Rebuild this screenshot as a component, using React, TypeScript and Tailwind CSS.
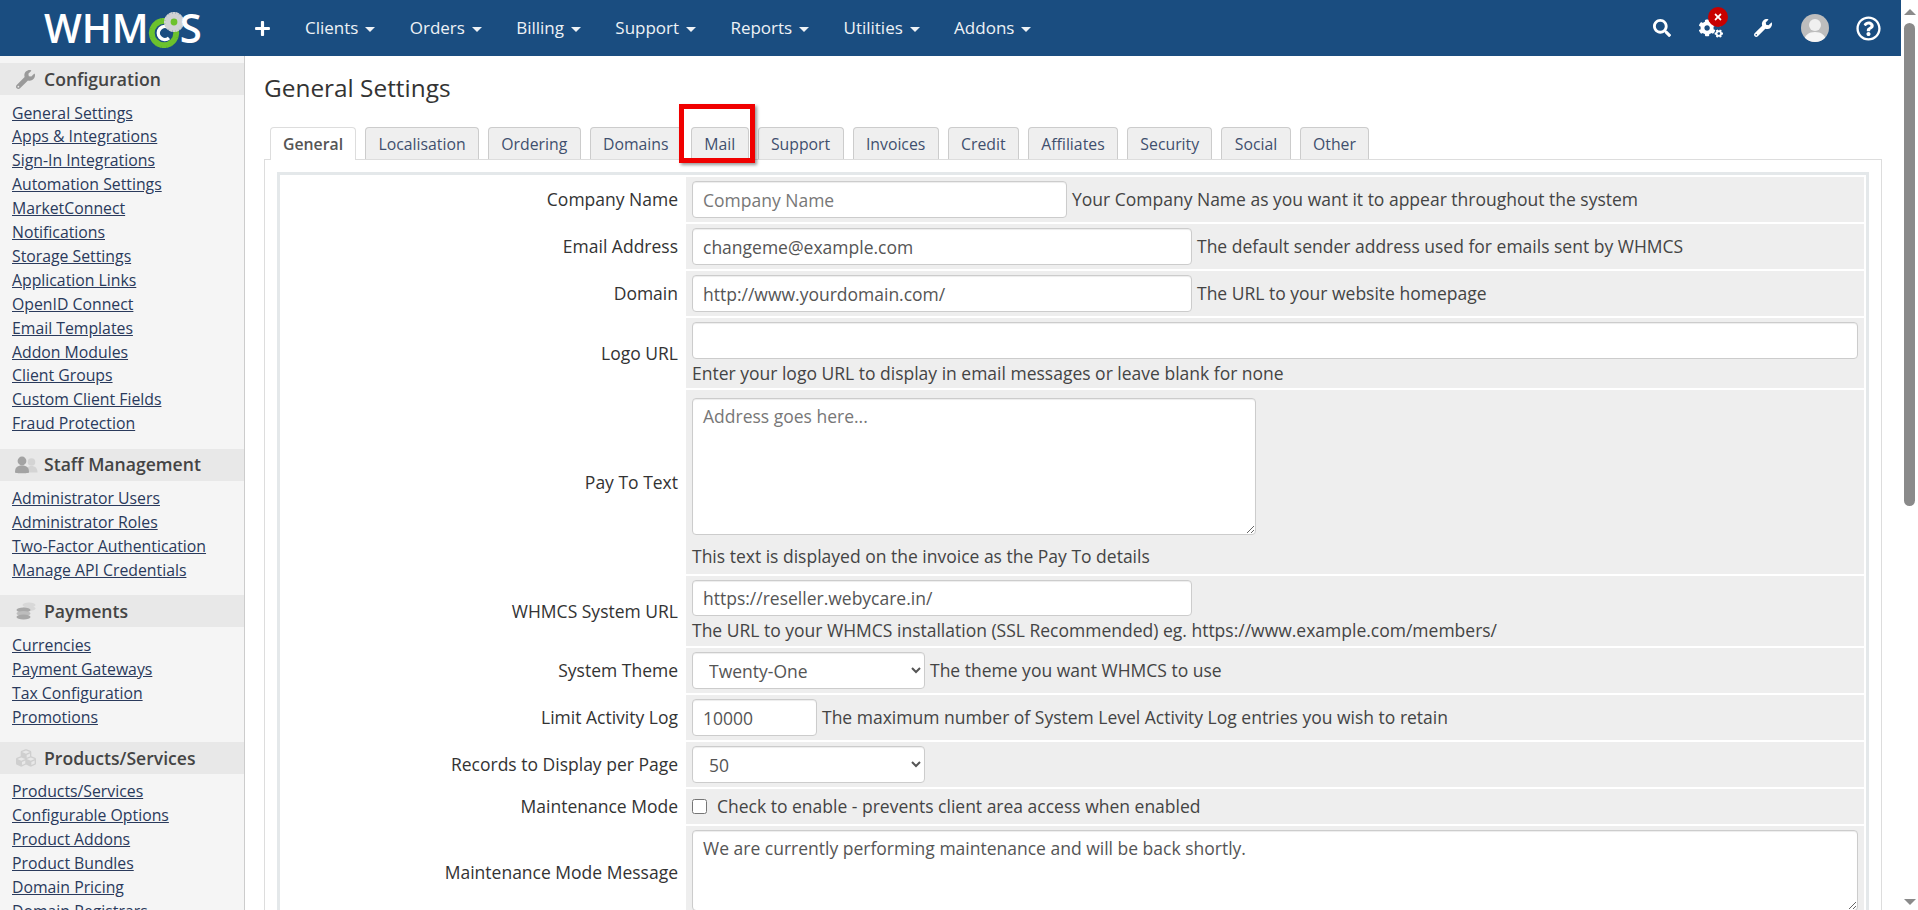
import type { ReactNode } from "react";
import { FaCogs, FaCubes, FaPlus, FaRegQuestionCircle, FaSearch, FaTimes, FaWrench } from "react-icons/fa";

const navItems = ["Clients", "Orders", "Billing", "Support", "Reports", "Utilities", "Addons"];
const tabs = ["General", "Localisation", "Ordering", "Domains", "Mail", "Support", "Invoices", "Credit", "Affiliates", "Security", "Social", "Other"];

const StaffIcon = () => (
  <svg width="24" height="18" viewBox="0 0 24 18">
    <circle cx="17.5" cy="6" r="3.8" fill="#d4d4d4" />
    <path d="M12 16.5c0-4.5 2-6.5 5.5-6.5s6 2 6 6.5z" fill="#d4d4d4" />
    <circle cx="8" cy="5" r="4.4" fill="#a3a3a3" />
    <path d="M1 16.5C1 11.5 3 9.5 8 9.5s7 2 7 7c0 1-14 1-14 0z" fill="#a3a3a3" />
  </svg>
);

const CoinsIcon = () => (
  <svg width="20" height="18" viewBox="0 0 20 18">
    <ellipse cx="13" cy="3" rx="6.5" ry="2.5" fill="#d8d8d8" />
    <ellipse cx="13" cy="6.5" rx="6.5" ry="2.5" fill="#d8d8d8" />
    <ellipse cx="7.5" cy="8" rx="7" ry="2.6" fill="#a8a8a8" />
    <ellipse cx="7.5" cy="11.5" rx="7" ry="2.6" fill="#bdbdbd" />
    <ellipse cx="7.5" cy="15" rx="7" ry="2.6" fill="#a8a8a8" />
  </svg>
);

const sections: { title: string; icon: ReactNode; links: string[] }[] = [
  {
    title: "Configuration",
    icon: <FaWrench size={19} color="#9a9a9a" />,
    links: [
      "General Settings",
      "Apps & Integrations",
      "Sign-In Integrations",
      "Automation Settings",
      "MarketConnect",
      "Notifications",
      "Storage Settings",
      "Application Links",
      "OpenID Connect",
      "Email Templates",
      "Addon Modules",
      "Client Groups",
      "Custom Client Fields",
      "Fraud Protection",
    ],
  },
  {
    title: "Staff Management",
    icon: <StaffIcon />,
    links: ["Administrator Users", "Administrator Roles", "Two-Factor Authentication", "Manage API Credentials"],
  },
  {
    title: "Payments",
    icon: <CoinsIcon />,
    links: ["Currencies", "Payment Gateways", "Tax Configuration", "Promotions"],
  },
  {
    title: "Products/Services",
    icon: <FaCubes size={20} color="#cfcfcf" />,
    links: ["Products/Services", "Configurable Options", "Product Addons", "Product Bundles", "Domain Pricing", "Domain Registrars"],
  },
];

const inputClass =
  "block h-[37px] rounded-[4px] border border-[#ccc] bg-white px-[10px] text-[#555] shadow-[inset_0_1px_1px_rgba(0,0,0,0.075)] outline-none placeholder:text-[#777]";

const Gear = ({ cx, cy, r, teeth, fill, hole, holeSize }: { cx: number; cy: number; r: number; teeth: number; fill: string; hole: string; holeSize: number }) => (
  <g>
    {Array.from({ length: teeth }).map((_, i) => (
      <rect key={i} x={cx - r * 0.17} y={cy - r} width={r * 0.34} height={r * 2} fill={fill} transform={`rotate(${(i * 180) / teeth} ${cx} ${cy})`} />
    ))}
    <circle cx={cx} cy={cy} r={r * 0.82} fill={fill} />
    <circle cx={cx} cy={cy} r={r * holeSize} fill={hole} />
  </g>
);

const Logo = () => (
  <div className="flex w-[210px] shrink-0 items-center text-[40px] leading-none font-semibold text-white">
    <span>WHM</span>
    <svg width="31" height="56" viewBox="0 0 31 56" className="overflow-visible">
      <Gear cx={15} cy={33} r={15} teeth={9} fill="#6cc22d" hole="#1a4d80" holeSize={0.62} />
      <path d="M20 28a6.5 6.5 0 1 0 0 10" fill="none" stroke="#fff" strokeWidth="3.5" />
      <Gear cx={25} cy={22} r={10} teeth={8} fill="#cfd2d4" hole="#6cc22d" holeSize={0.34} />
    </svg>
    <span className="relative">S</span>
  </div>
);

const TopBar = () => (
  <header className="flex h-14 shrink-0 items-center bg-[#1a4d80] pr-[20px] pl-[44px] text-white">
    <Logo />
    <FaPlus size={17} className="mr-[34px]" />
    <nav className="flex items-center gap-[34.3px] text-[17px] text-[#eef2f6]">
      {navItems.map((item) => (
        <span key={item} className="flex items-center">
          {item}
          <span className="mt-[2px] ml-[7px] border-x-[5px] border-t-[5px] border-x-transparent border-t-[#eef2f6]" />
        </span>
      ))}
    </nav>
    <div className="ml-auto flex items-center">
      <FaSearch size={18} />
      <div className="relative ml-[28px]">
        <FaCogs size={24} />
        <span className="absolute -top-[9px] left-[9px] flex h-[20px] w-[20px] items-center justify-center rounded-full bg-[#c80000]">
          <FaTimes size={10} />
        </span>
      </div>
      <FaWrench size={18} className="ml-[31px]" />
      <div className="ml-[29px] h-[28px] w-[28px] overflow-hidden rounded-full bg-[#bdbdbd]">
        <svg width="28" height="28" viewBox="0 0 28 28">
          <circle cx="14" cy="11" r="6" fill="#f0f0f0" />
          <path d="M3 28c0-7 5-10 11-10s11 3 11 10z" fill="#f5f5f5" />
        </svg>
      </div>
      <FaRegQuestionCircle size={25} className="ml-[27px]" />
    </div>
  </header>
);

const Sidebar = () => (
  <aside className="w-[245px] shrink-0 overflow-hidden border-r border-[#ccc] bg-[#f5f5f5] pt-[7px]">
    {sections.map((section) => (
      <section key={section.title} className="mb-[12.5px]">
        <h3 className="flex h-[32px] items-center bg-[#e8e8e8] text-[17.6px] font-semibold text-[#444]">
          <span className="flex w-[44px] shrink-0 justify-center pl-[7px]">{section.icon}</span>
          {section.title}
        </h3>
        <ul className="mt-[6.5px] pl-[12px] text-[15.8px] leading-[23.9px] text-[#2a3a5c]">
          {section.links.map((link) => (
            <li key={link}>
              <a className="underline">{link}</a>
            </li>
          ))}
        </ul>
      </section>
    ))}
  </aside>
);

const Field = ({ label, tall, children }: { label: string; tall?: boolean; children: ReactNode }) => (
  <>
    <label className="flex items-center justify-end pr-[8px] text-[#333]">{label}</label>
    <div className={`bg-[#eee] px-[6px] ${tall ? "pt-[4px] pb-[3px]" : "flex items-center py-[4px]"}`}>{children}</div>
  </>
);

const Help = ({ children }: { children: ReactNode }) => <span className="ml-[5px] text-[#444]">{children}</span>;

const HelpBlock = ({ className, children }: { className: string; children: ReactNode }) => (
  <span className={`block leading-[24px] text-[#444] ${className}`}>{children}</span>
);

const SettingsForm = () => (
  <div className="grid grid-cols-[404px_1fr] gap-y-[2px] border-[3px] border-[#e4e8ea] p-[2px] text-[17.5px]">
    <Field label="Company Name">
      <input className={`${inputClass} w-[375px]`} placeholder="Company Name" />
      <Help>Your Company Name as you want it to appear throughout the system</Help>
    </Field>
    <Field label="Email Address">
      <input className={`${inputClass} w-[500px]`} defaultValue="changeme@example.com" />
      <Help>The default sender address used for emails sent by WHMCS</Help>
    </Field>
    <Field label="Domain">
      <input className={`${inputClass} w-[500px]`} defaultValue="http://www.yourdomain.com/" />
      <Help>The URL to your website homepage</Help>
    </Field>
    <Field label="Logo URL" tall>
      <input className={`${inputClass} w-full`} />
      <HelpBlock className="mt-[2px]">Enter your logo URL to display in email messages or leave blank for none</HelpBlock>
    </Field>
    <Field label="Pay To Text" tall>
      <textarea className={`${inputClass} mt-[4px] !h-[137px] w-[564px] py-[3.5px]`} placeholder="Address goes here..." />
      <HelpBlock className="mt-[9px] pb-[3px]">This text is displayed on the invoice as the Pay To details</HelpBlock>
    </Field>
    <Field label="WHMCS System URL" tall>
      <input className={`${inputClass} !h-[36px] w-[500px]`} defaultValue="https://reseller.webycare.in/" />
      <HelpBlock className="mt-[2px] pb-[1px]">The URL to your WHMCS installation (SSL Recommended) eg. https://www.example.com/members/</HelpBlock>
    </Field>
    <Field label="System Theme">
      <select className={`${inputClass} w-[233px] pr-[2px] pl-[12px]`} defaultValue="Twenty-One">
        <option>Twenty-One</option>
      </select>
      <Help>The theme you want WHMCS to use</Help>
    </Field>
    <Field label="Limit Activity Log">
      <input className={`${inputClass} w-[125px]`} defaultValue="10000" />
      <Help>The maximum number of System Level Activity Log entries you wish to retain</Help>
    </Field>
    <Field label="Records to Display per Page">
      <select className={`${inputClass} w-[233px] pr-[2px] pl-[12px]`} defaultValue="50">
        <option>50</option>
      </select>
    </Field>
    <Field label="Maintenance Mode">
      <div className="flex h-[27px] items-center">
        <input type="checkbox" className="h-[15px] w-[15px] appearance-auto" />
        <span className="ml-[10px] text-[#444]">Check to enable - prevents client area access when enabled</span>
      </div>
    </Field>
    <Field label="Maintenance Mode Message" tall>
      <textarea
        className={`${inputClass} mb-[4px] !h-[81px] w-full py-[3.5px]`}
        defaultValue="We are currently performing maintenance and will be back shortly."
      />
    </Field>
  </div>
);

const Main = () => (
  <main className="relative min-w-0 flex-1 overflow-hidden bg-white px-[19px] pt-[16px]">
    <h1 className="h-[32px] text-[24.4px] leading-[32px] text-[#333]">General Settings</h1>
    <div className="mt-[23px] flex h-[33px] border-b border-[#ddd] text-[15.8px]">
      {tabs.map((tab, i) => (
        <span
          key={tab}
          className={
            i === 0
              ? "z-10 mr-[9px] ml-[6px] h-[33px] rounded-t-[4px] border border-b-0 border-[#ddd] bg-white px-[12px] leading-[33px] font-semibold text-[#555]"
              : "mr-[9px] h-[32px] rounded-t-[4px] border border-b-0 border-[#ccc] bg-[#efefef] px-[12.35px] leading-[33px] text-[#3f4f6e]"
          }
        >
          {tab}
        </span>
      ))}
    </div>
    <div className="h-[800px] border-x border-[#ddd] px-[12px] pt-[12px]">
      <SettingsForm />
    </div>
    {/* red marker from the original screenshot */}
    <div className="absolute top-[48px] left-[434px] h-[59px] w-[76px] border-[5px] border-[#f00000] shadow-[2px_2px_3px_rgba(0,0,0,0.4)]" />
  </main>
);

const Scrollbar = () => (
  <div className="flex w-[17px] shrink-0 flex-col items-center bg-white pt-[9px] pb-[5px]">
    <span className="border-x-[6px] border-b-[6px] border-x-transparent border-b-[#8a8a8a]" />
    <span className="mt-[8px] h-[483px] w-[11px] rounded-full bg-[#8a8a8a]" />
    <span className="mt-auto border-x-[6px] border-t-[6px] border-x-transparent border-t-[#8a8a8a]" />
  </div>
);

export default function App() {
  return (
    <div className="flex h-[910px] w-[1918px] overflow-hidden bg-white font-['Open_Sans',sans-serif] text-[16px]">
      <div className="flex min-w-0 flex-1 flex-col">
        <TopBar />
        <div className="flex min-h-0 flex-1">
          <Sidebar />
          <Main />
        </div>
      </div>
      <Scrollbar />
    </div>
  );
}
